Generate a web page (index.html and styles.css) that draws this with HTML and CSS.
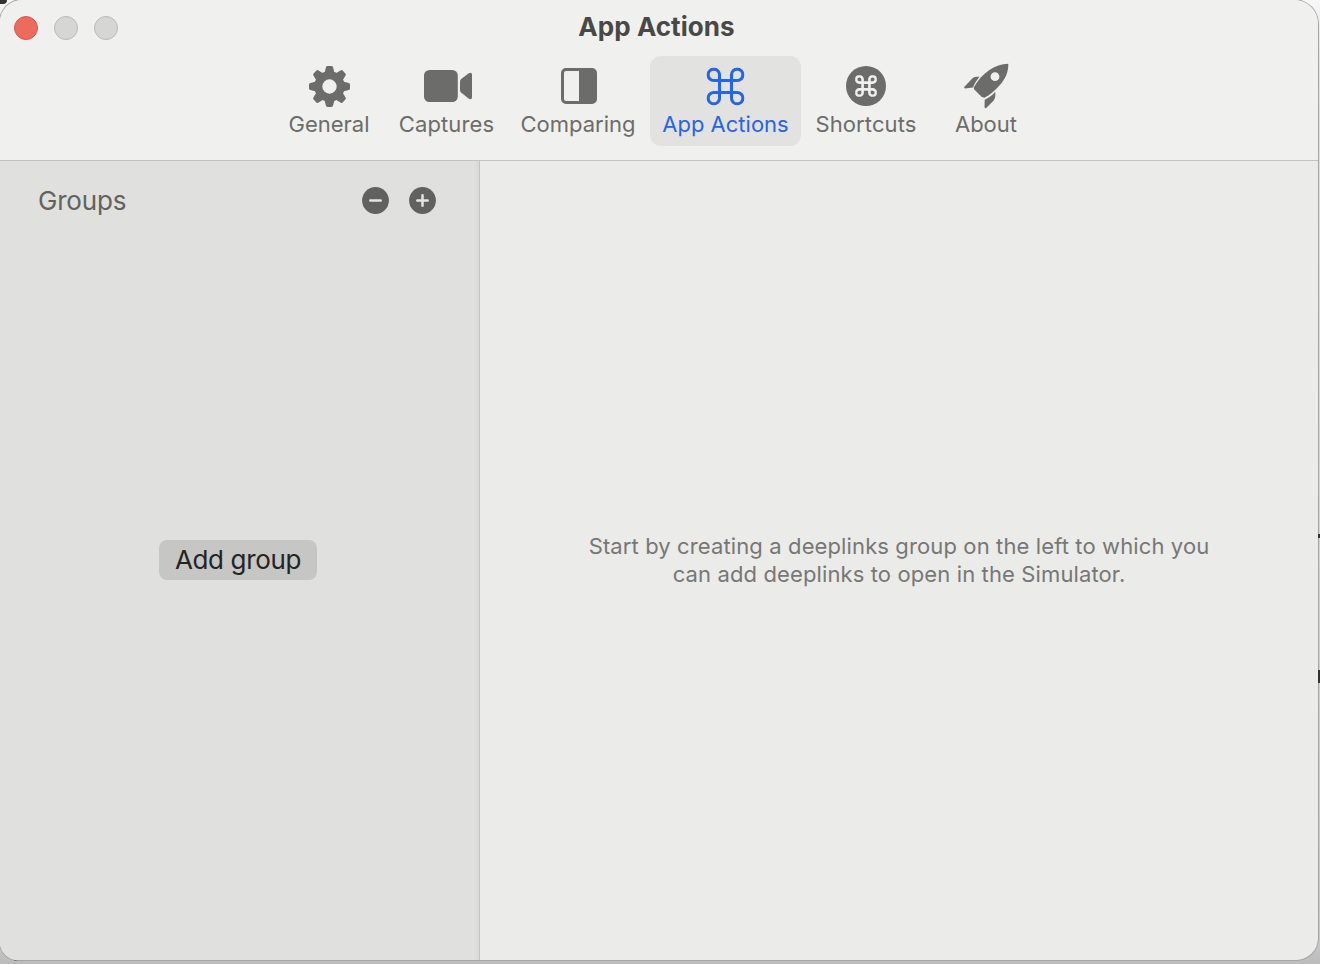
FILE: index.html
```html
<!DOCTYPE html>
<html lang="en">
<head>
<meta charset="utf-8">
<title>App Actions</title>
<link rel="stylesheet" href="styles.css">
</head>
<body>
<svg class="symbols" width="0" height="0">
  <symbol id="command" viewBox="0 0 38 38">
    <path d="M13 13V7.3A5.7 5.7 0 1 0 7.3 13H30.7A5.7 5.7 0 1 0 25 7.3V30.7A5.7 5.7 0 1 0 30.7 25H7.3A5.7 5.7 0 1 0 13 30.7Z" fill="none" stroke="currentColor"/>
  </symbol>
</svg>
<span class="speck speck-top"></span>
<span class="speck speck-bottom"></span>
<span class="speck speck-mid"></span>
<span class="speck speck-low"></span>
<main class="window">
  <header class="toolbar">
    <div class="lights"><i class="light close"></i><i class="light"></i><i class="light"></i></div>
    <h1 class="title">App Actions</h1>
    <nav class="tabs">
      <a class="tab general">
        <svg class="icon" width="50" height="48" viewBox="0 0 50 48"><g fill="currentColor"><circle cx="25.500" cy="24.500" r="11.200" fill="none" stroke="currentColor" stroke-width="8"/>
          <g id="teeth"><path id="tooth" d="M20.500 11L21.900 5.400Q22.200 4 23.500 4H27.500Q28.800 4 29.100 5.400L30.500 11Z"/><use href="#tooth" transform="rotate(45 25.500 24.500)"/><use href="#tooth" transform="rotate(90 25.500 24.500)"/><use href="#tooth" transform="rotate(135 25.500 24.500)"/></g><use href="#teeth" transform="rotate(180 25.500 24.500)"/></g></svg>
        <span>General</span>
      </a>
      <a class="tab captures">
        <svg class="icon" width="50" height="48" viewBox="0 0 50 48"><rect x="2" y="8" width="33.800" height="32" rx="5.500" fill="currentColor"/><path d="M38 19.500Q38 18 39.100 17L46.500 11.500Q50 9.500 50 13V35Q50 38.500 46.500 36.500L39.100 30.500Q38 29.500 38 28Z" fill="currentColor"/></svg>
        <span>Captures</span>
      </a>
      <a class="tab comparing">
        <svg class="icon" width="50" height="48" viewBox="0 0 50 48"><rect x="9.500" y="7.500" width="33" height="33" rx="3.500" fill="none" stroke="currentColor" stroke-width="3"/><path d="M26 7H41V41H26Z" fill="currentColor"/></svg>
        <span>Comparing</span>
      </a>
      <a class="tab actions active">
        <svg class="icon" width="50" height="48" viewBox="0 0 50 48"><use href="#command" x="5.500" y="5.500" width="38" height="38" stroke-width="3.100"/></svg>
        <span>App Actions</span>
      </a>
      <a class="tab shortcuts">
        <svg class="icon" width="50" height="48" viewBox="0 0 50 48"><circle cx="25" cy="24" r="20" fill="currentColor"/><use class="inner" href="#command" x="14.200" y="13.200" width="21.600" height="21.600" stroke-width="4.600"/></svg>
        <span>Shortcuts</span>
      </a>
      <a class="tab about">
        <svg class="icon" width="50" height="48" viewBox="0 0 50 48"><g fill="currentColor"><path fill-rule="evenodd" d="M47.300 1.700C47.500 10 44.500 17 38 24C34 28.500 29.500 32.500 23.500 35.800L20.800 35L13 27.300L12.700 25.500C17 18 22 12.500 28 8.300C34 4 40.500 1.800 47.300 1.700ZM34 10.300A4.400 4.400 0 1 0 34 19.100A4.400 4.400 0 1 0 34 10.300Z"/><path d="M18.500 14.700C14.500 14.700 12.500 15 11 16.700L3 25.300L4 26.500L12 25.500C13.500 21.500 15.500 18.500 18.500 14.700Z"/><path d="M34.200 30C34.800 35 33.700 37.300 32.200 39.100L24.700 46.600L23.500 45.300L23.700 37.800C27.500 36 31 33.500 34.200 30Z"/></g></svg>
        <span>About</span>
      </a>
    </nav>
  </header>
  <div class="content">
    <aside class="sidebar">
      <div class="groups-head">
        <h2 class="groups-title">Groups</h2>
        <svg width="27" height="27" viewBox="0 0 27 27"><circle cx="13.500" cy="13.500" r="13.400" fill="#61615f"/><path d="M8.300 13.500H18.700" class="sign"/></svg>
        <svg width="27" height="27" viewBox="0 0 27 27"><circle cx="13.500" cy="13.500" r="13.400" fill="#61615f"/><path d="M8.300 13.500H18.700M13.500 8.300V18.700" class="sign"/></svg>
      </div>
      <div class="groups-empty"><button class="add">Add group</button></div>
    </aside>
    <section class="detail"><p class="hint">Start by creating a deeplinks group on the left to which you<br>can add deeplinks to open in the Simulator.</p></section>
  </div>
</main>
</body>
</html>
```
FILE: styles.css
```css
* { box-sizing: border-box; }
body { margin: 0; width: 1320px; height: 964px; overflow: hidden; position: relative; font-family: Inter, "Liberation Sans", sans-serif; background: linear-gradient(#f7f7f7 0, #e2e2e2 60px, #c8c8c8 940px, #bcbcbc); }
.symbols { position: absolute; }
.window { position: relative; display: flex; flex-direction: column; width: 1318px; height: 960px; border-radius: 22px 24px 22px 18px; overflow: hidden; background: #ebebe9; box-shadow: 0 0 0 1px #a6a6a6; }
.toolbar { position: relative; height: 161px; flex: none; background: #f0f0ee; border-bottom: 1px solid #c3c3c1; }
.lights { position: absolute; left: 14px; top: 16px; display: flex; gap: 16px; }
.light { width: 24px; height: 24px; border-radius: 50%; background: #d6d6d4; border: 1px solid #b9b9b7; }
.close { background: #ec6a5e; border-color: #d8574c; }
.title { margin: 0; padding-top: 11px; height: 56px; line-height: 32px; font-size: 26px; font-weight: 700; text-align: center; color: #484846; padding-right: 5px; letter-spacing: .05px; }
.tabs { display: flex; gap: 3px; padding-left: 274px; }
.tab { display: flex; flex-direction: column; align-items: center; height: 90px; padding-top: 6px; border-radius: 11px; color: #6c6c6a; font-size: 22px; line-height: 28px; white-space: nowrap; }
.icon { display: block; overflow: visible; }
.general, .about { width: 110px; }
.captures { width: 119px; }
.comparing { width: 138px; }
.actions { width: 151px; }
.shortcuts { width: 124px; }
.captures, .shortcuts { letter-spacing: .12px; }
.active { background: #e2e2e0; color: #2864e6; }
.inner { color: #f0f0ee; }
.content { display: flex; flex: 1; }
.sidebar { display: flex; flex-direction: column; width: 480px; background: linear-gradient(to right, #e0e0de 474px, #d9d9d7 479px); border-right: 1px solid #c5c5c3; }
.groups-head { display: flex; align-items: center; gap: 20px; height: 79px; padding: 0 43px 0 38px; }
.groups-title { flex: 1; margin: 0; font-size: 26px; font-weight: 400; letter-spacing: -.2px; color: #626260; }
.sign { stroke: #e5e5e3; stroke-width: 2.5; stroke-linecap: round; }
.groups-empty { flex: 1; display: flex; justify-content: center; padding: 300px 3px 0 0; }
.add { width: 158px; height: 40px; padding: 0 0 1px; border: 0; border-radius: 8px; background: #c6c6c4; color: #242423; font: 26px/37px Inter, "Liberation Sans", sans-serif; letter-spacing: -.35px; }
.detail { flex: 1; display: flex; align-items: center; justify-content: center; padding-bottom: 2px; }
.hint { margin: 0; font-size: 22px; line-height: 28px; letter-spacing: .12px; text-align: center; color: #777775; white-space: nowrap; }
.speck { position: absolute; background: #333; }
.speck-top { left: 0; top: 0; width: 7px; height: 4px; border-radius: 0 0 4px 0; }
.speck-bottom { left: 14px; top: 959px; width: 6px; height: 2px; }
.speck-mid { left: 1318px; top: 534px; width: 2px; height: 4px; z-index: 1; }
.speck-low { left: 1318px; top: 670px; width: 2px; height: 13px; z-index: 1; }
```
